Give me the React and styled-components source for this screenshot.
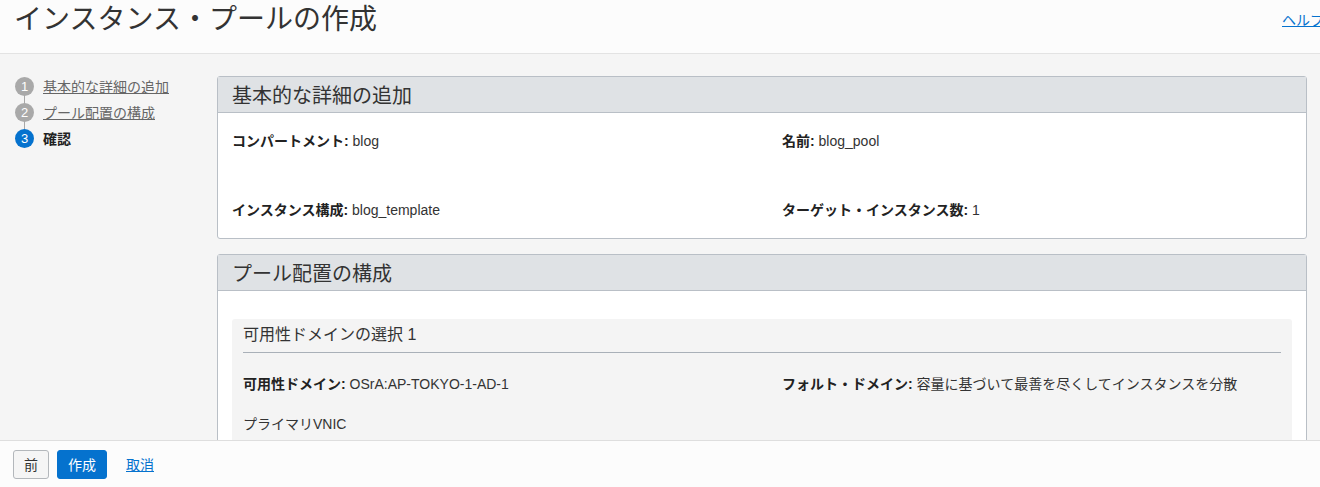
import React from 'react'
import styled, { createGlobalStyle } from 'styled-components'

const GlobalStyle = createGlobalStyle`
  html, body {
    margin: 0;
    padding: 0;
    background: #f5f5f5;
    font-family: "Liberation Sans", "Noto Sans CJK JP", sans-serif;
    color: #333;
  }
  * { box-sizing: border-box; }
`

const Page = styled.div`
  height: 487px;
  display: flex;
  flex-direction: column;
  overflow: hidden;
`

const Header = styled.header`
  height: 54px;
  flex: none;
  display: flex;
  justify-content: space-between;
  align-items: flex-start;
  padding: 5px 0 0 14px;
  background: #fcfcfc;
  border-bottom: 1px solid #e3e3e3;
  overflow: hidden;
`

const Title = styled.h1`
  margin: 0;
  font-size: 28px;
  font-weight: 400;
  line-height: 30px;
  color: #333;
`

const HelpLink = styled.a`
  margin: 6px -4px 0 0;
  font-size: 14px;
  line-height: 18px;
  color: #0572ce;
  text-decoration: underline;
  white-space: nowrap;
`

const Body = styled.div`
  flex: 1;
  display: flex;
  min-height: 0;
  overflow: hidden;
`

const Steps = styled.ol`
  width: 217px;
  flex: none;
  margin: 0;
  padding: 19px 0 0 15px;
  list-style: none;
`

const Step = styled.li`
  position: relative;
  display: flex;
  align-items: center;
  gap: 9px;
  height: 26px;
  font-size: 14px;
  &:not(:last-child)::after {
    content: '';
    position: absolute;
    left: 9px;
    top: 18px;
    height: 16px;
    border-left: 1px solid #a8a8a8;
  }
`

const StepNum = styled.span`
  width: 19px;
  height: 19px;
  border-radius: 50%;
  flex: none;
  display: flex;
  align-items: center;
  justify-content: center;
  font-size: 13px;
  color: #fff;
  background: ${p => (p.$active ? '#0572ce' : '#a9a9a9')};
  position: relative;
  z-index: 1;
`

const StepLabel = styled.span`
  color: ${p => (p.$active ? '#222' : '#666')};
  font-weight: ${p => (p.$active ? 700 : 400)};
  text-decoration: ${p => (p.$active ? 'none' : 'underline')};
`

const Content = styled.div`
  flex: none;
  width: 1090px;
  padding-top: 22px;
  display: flex;
  flex-direction: column;
  gap: 15px;
`

const Panel = styled.section`
  border: 1px solid #b9bfc6;
  border-radius: 3px;
  background: #fff;
  flex: none;
`

const PanelHead = styled.h2`
  margin: 0;
  height: 36px;
  padding: 0 14px;
  display: flex;
  align-items: center;
  background: #dfe2e5;
  border-bottom: 1px solid #b9bfc6;
  font-size: 20px;
  font-weight: 400;
  color: #333;
`

const PanelBody = styled.div`
  padding: ${p => p.$pad || '20px 14px'};
`

const FieldGrid = styled.div`
  display: grid;
  grid-template-columns: ${p => p.$first || '550px'} 1fr;
  row-gap: ${p => p.$gap || '53px'};
`

const Field = styled.div`
  font-size: 14px;
  line-height: 16px;
  color: #333;
  b {
    font-weight: 700;
    color: #222;
  }
`

const SubSection = styled.div`
  background: #f4f4f4;
  border-radius: 3px;
  padding: 6px 11px 12px;
`

const SubTitle = styled.h3`
  margin: 0 0 23px;
  padding-bottom: 7px;
  border-bottom: 1px solid #a9b0b8;
  font-size: 16px;
  font-weight: 400;
  line-height: 20px;
  color: #333;
`

const Footer = styled.footer`
  height: 47px;
  flex: none;
  display: flex;
  align-items: center;
  gap: 8px;
  padding: 0 13px;
  background: #fcfcfc;
  border-top: 1px solid #dedede;
`

const Button = styled.button`
  height: 29px;
  padding: 0 10px;
  border-radius: 3px;
  font-family: inherit;
  font-size: 14px;
  border: 1px solid ${p => (p.$primary ? '#0572ce' : '#b3b7bb')};
  background: ${p => (p.$primary ? '#0572ce' : '#f5f5f5')};
  color: ${p => (p.$primary ? '#fff' : '#333')};
`

const LinkButton = styled.a`
  margin-left: 11px;
  font-size: 14px;
  color: #0572ce;
  text-decoration: underline;
`

const steps = ['基本的な詳細の追加', 'プール配置の構成', '確認']

export default function App() {
  return (
    <Page>
      <GlobalStyle />
      <Header>
        <Title>インスタンス・プールの作成</Title>
        <HelpLink>ヘルプ</HelpLink>
      </Header>
      <Body>
        <Steps>
          {steps.map((s, i) => (
            <Step key={s}>
              <StepNum $active={i === 2}>{i + 1}</StepNum>
              <StepLabel $active={i === 2}>{s}</StepLabel>
            </Step>
          ))}
        </Steps>
        <Content>
          <Panel>
            <PanelHead>基本的な詳細の追加</PanelHead>
            <PanelBody>
              <FieldGrid>
                <Field><b>コンパートメント:</b> blog</Field>
                <Field><b>名前:</b> blog_pool</Field>
                <Field><b>インスタンス構成:</b> blog_template</Field>
                <Field><b>ターゲット・インスタンス数:</b> 1</Field>
              </FieldGrid>
            </PanelBody>
          </Panel>
          <Panel>
            <PanelHead>プール配置の構成</PanelHead>
            <PanelBody $pad="28px 14px 20px">
              <SubSection>
                <SubTitle>可用性ドメインの選択 1</SubTitle>
                <FieldGrid $first="539px" $gap="24px">
                  <Field><b>可用性ドメイン:</b> OSrA:AP-TOKYO-1-AD-1</Field>
                  <Field><b>フォルト・ドメイン:</b> 容量に基づいて最善を尽くしてインスタンスを分散</Field>
                  <Field>プライマリVNIC</Field>
                </FieldGrid>
              </SubSection>
            </PanelBody>
          </Panel>
        </Content>
      </Body>
      <Footer>
        <Button>前</Button>
        <Button $primary>作成</Button>
        <LinkButton>取消</LinkButton>
      </Footer>
    </Page>
  )
}
